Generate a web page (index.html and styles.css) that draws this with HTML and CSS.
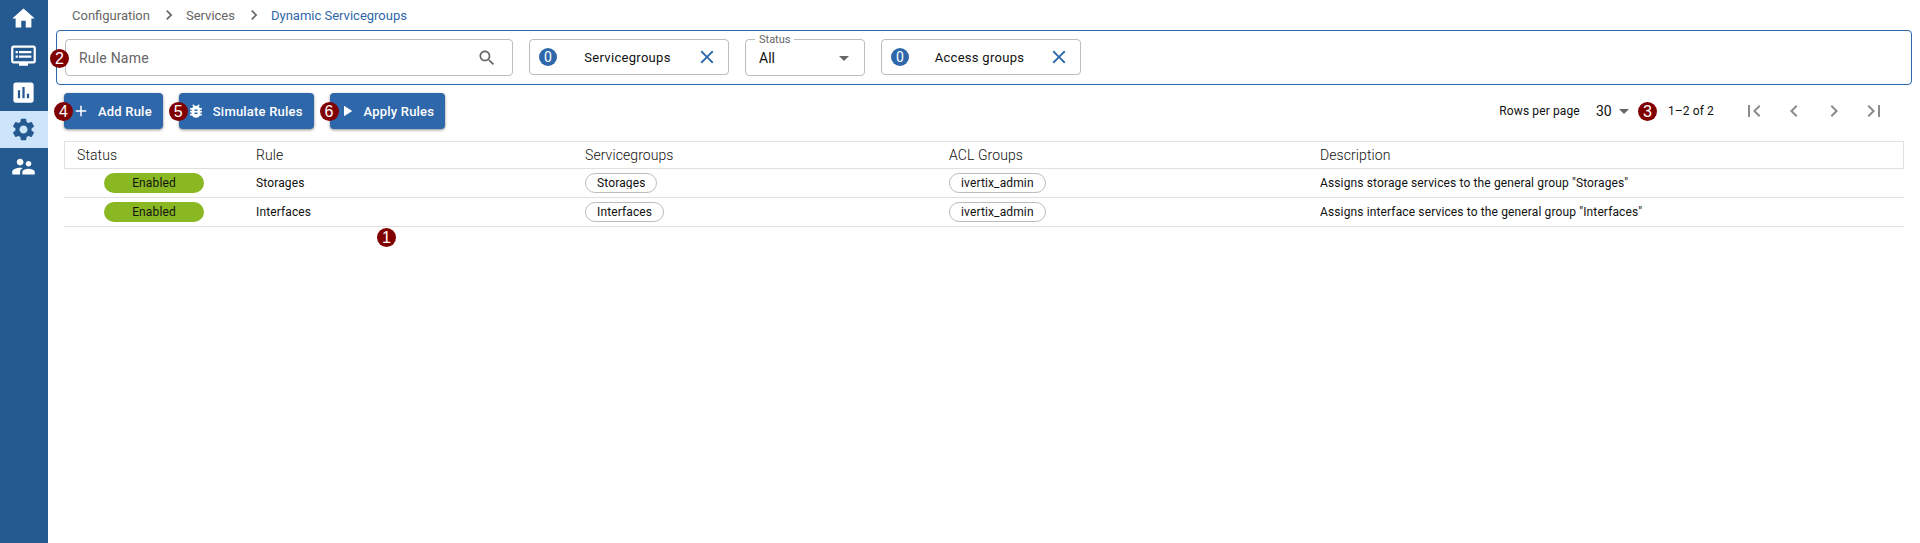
FILE: index.html
```html
<!DOCTYPE html>
<html lang="en">

<head>
    <meta charset="UTF-8">
    <title>Dynamic Servicegroups</title>
    <link rel="stylesheet" href="styles.css">
</head>

<body>
    <div class="app">
        <nav class="side">
            <a class="side-item">
                <svg viewBox="0 0 24 24"><path d="M10 20v-6h4v6h5v-8h3L12 3 2 12h3v8z"/></svg>
            </a>
            <a class="side-item">
                <svg viewBox="0 0 24 24"><path d="M21 3H3c-1.1 0-2 .9-2 2v12c0 1.1.9 2 2 2h5v2h8v-2h5c1.1 0 1.99-.9 1.99-2L23 5c0-1.1-.9-2-2-2zm0 14H3V5h18v12zm-2-9H8v2h11V8zm0 4H8v2h11v-2zM7 8H5v2h2V8zm0 4H5v2h2v-2z"/></svg>
            </a>
            <a class="side-item">
                <svg viewBox="0 0 24 24"><path d="M19 3H5c-1.1 0-2 .9-2 2v14c0 1.1.9 2 2 2h14c1.1 0 2-.9 2-2V5c0-1.1-.9-2-2-2zM9 17H7v-7h2v7zm4 0h-2V7h2v10zm4 0h-2v-4h2v4z"/></svg>
            </a>
            <a class="side-item active">
                <svg viewBox="0 0 24 24"><path d="M19.14 12.94c.04-.3.06-.61.06-.94 0-.32-.02-.64-.07-.94l2.03-1.58c.18-.14.23-.41.12-.61l-1.92-3.32c-.12-.22-.37-.29-.59-.22l-2.39.96c-.5-.38-1.03-.7-1.62-.94l-.36-2.54c-.04-.24-.24-.41-.48-.41h-3.84c-.24 0-.43.17-.47.41l-.36 2.54c-.59.24-1.13.57-1.62.94l-2.39-.96c-.22-.08-.47 0-.59.22L2.74 8.87c-.12.21-.08.47.12.61l2.03 1.58c-.05.3-.09.63-.09.94s.02.64.07.94l-2.03 1.58c-.18.14-.23.41-.12.61l1.92 3.32c.12.22.37.29.59.22l2.39-.96c.5.38 1.03.7 1.62.94l.36 2.54c.05.24.24.41.48.41h3.84c.24 0 .44-.17.47-.41l.36-2.54c.59-.24 1.13-.56 1.62-.94l2.39.96c.22.08.47 0 .59-.22l1.92-3.32c.12-.22.07-.47-.12-.61l-2.01-1.58zM12 15.6c-1.98 0-3.6-1.62-3.6-3.6s1.62-3.6 3.6-3.6 3.6 1.62 3.6 3.6-1.62 3.6-3.6 3.6z"/></svg>
            </a>
            <a class="side-item">
                <svg viewBox="0 0 24 24"><path d="M16.5 12c1.38 0 2.49-1.12 2.49-2.5S17.88 7 16.5 7C15.12 7 14 8.12 14 9.5s1.12 2.5 2.5 2.5zM9 11c1.66 0 2.99-1.34 2.99-3S10.66 5 9 5C7.34 5 6 6.34 6 8s1.34 3 3 3zm7.5 3c-1.83 0-5.5.92-5.5 2.75V19h11v-2.25c0-1.83-3.67-2.75-5.5-2.75zM9 13c-2.33 0-7 1.17-7 3.5V19h7v-2.25c0-.85.33-2.34 2.37-3.47C10.5 13.1 9.66 13 9 13z"/></svg>
            </a>
        </nav>

        <main class="main">
            <div class="crumbs">
                <span>Configuration</span>
                <svg class="crumb-sep" viewBox="0 0 24 24"><path d="M10 6L8.59 7.41 13.17 12l-4.58 4.59L10 18l6-6z"/></svg>
                <span>Services</span>
                <svg class="crumb-sep" viewBox="0 0 24 24"><path d="M10 6L8.59 7.41 13.17 12l-4.58 4.59L10 18l6-6z"/></svg>
                <span class="crumb-current">Dynamic Servicegroups</span>
            </div>

            <div class="filters">
                <span class="note note-filter">2</span>
                <div class="search">
                    <span>Rule Name</span>
                    <svg viewBox="0 0 24 24"><path d="M15.5 14h-.79l-.28-.27C15.41 12.59 16 11.11 16 9.5 16 5.91 13.09 3 9.5 3S3 5.91 3 9.5 5.91 16 9.5 16c1.61 0 3.09-.59 4.23-1.57l.27.28v.79l5 4.99L20.49 19l-4.99-5zm-6 0C7.01 14 5 11.99 5 9.5S7.01 5 9.5 5 14 7.01 14 9.5 11.99 14 9.5 14z"/></svg>
                </div>
                <div class="picker">
                    <span class="count">0</span>
                    <span class="picker-label">Servicegroups</span>
                    <svg viewBox="0 0 24 24"><path d="M19 6.41L17.59 5 12 10.59 6.41 5 5 6.41 10.59 12 5 17.59 6.41 19 12 13.41 17.59 19 19 17.59 13.41 12z"/></svg>
                </div>
                <div class="status-select">
                    <span class="status-legend">Status</span>
                    <span>All</span>
                    <svg viewBox="0 0 24 24"><path d="M7 10l5 5 5-5z"/></svg>
                </div>
                <div class="picker">
                    <span class="count">0</span>
                    <span class="picker-label">Access groups</span>
                    <svg viewBox="0 0 24 24"><path d="M19 6.41L17.59 5 12 10.59 6.41 5 5 6.41 10.59 12 5 17.59 6.41 19 12 13.41 17.59 19 19 17.59 13.41 12z"/></svg>
                </div>
            </div>

            <div class="toolbar">
                <button class="btn">
                    <span class="note note-btn">4</span>
                    <svg viewBox="0 0 24 24"><path d="M19 13h-6v6h-2v-6H5v-2h6V5h2v6h6v2z"/></svg>
                    Add Rule
                </button>
                <button class="btn">
                    <span class="note note-btn">5</span>
                    <svg viewBox="0 0 24 24"><path d="M20 8h-2.81c-.45-.78-1.07-1.45-1.82-1.96L17 4.41 15.59 3l-2.17 2.17C12.96 5.06 12.49 5 12 5c-.49 0-.96.06-1.41.17L8.41 3 7 4.41l1.62 1.63C7.88 6.55 7.26 7.22 6.81 8H4v2h2.09c-.05.33-.09.66-.09 1v1H4v2h2v1c0 .34.04.67.09 1H4v2h2.81c1.04 1.79 2.97 3 5.19 3s4.15-1.21 5.19-3H20v-2h-2.09c.05-.33.09-.66.09-1v-1h2v-2h-2v-1c0-.34-.04-.67-.09-1H20V8zm-6 8h-4v-2h4v2zm0-4h-4v-2h4v2z"/></svg>
                    Simulate Rules
                </button>
                <button class="btn">
                    <span class="note note-btn">6</span>
                    <svg viewBox="0 0 24 24"><path d="M8 5v14l11-7z"/></svg>
                    Apply Rules
                </button>

                <div class="pager">
                    <span>Rows per page</span>
                    <span class="pager-size">30</span>
                    <svg class="pager-caret" viewBox="0 0 24 24"><path d="M7 10l5 5 5-5z"/></svg>
                    <span class="note note-pager">3</span>
                    <span class="pager-range">1–2 of 2</span>
                    <div class="pager-buttons">
                        <svg viewBox="0 0 24 24"><path d="M18.41 16.59L13.82 12l4.59-4.59L17 6l-6 6 6 6zM6 6h2v12H6z"/></svg>
                        <svg viewBox="0 0 24 24"><path d="M15.41 7.41L14 6l-6 6 6 6 1.41-1.41L10.83 12z"/></svg>
                        <svg viewBox="0 0 24 24"><path d="M10 6L8.59 7.41 13.17 12l-4.58 4.59L10 18l6-6z"/></svg>
                        <svg viewBox="0 0 24 24"><path d="M5.59 7.41L10.18 12l-4.59 4.59L7 18l6-6-6-6zM16 6h2v12h-2z"/></svg>
                    </div>
                </div>
            </div>

            <div class="rules">
                <div class="row head">
                    <div>Status</div>
                    <div>Rule</div>
                    <div>Servicegroups</div>
                    <div>ACL Groups</div>
                    <div>Description</div>
                </div>
                <div class="row">
                    <div><span class="enabled">Enabled</span></div>
                    <div>Storages</div>
                    <div><span class="chip"><span class="chip-text">Storages</span></span></div>
                    <div><span class="chip"><span class="chip-text">ivertix_admin</span></span></div>
                    <div>Assigns storage services to the general group "Storages"</div>
                </div>
                <div class="row">
                    <div><span class="enabled">Enabled</span></div>
                    <div>Interfaces</div>
                    <div><span class="chip"><span class="chip-text">Interfaces</span></span></div>
                    <div><span class="chip"><span class="chip-text">ivertix_admin</span></span></div>
                    <div>Assigns interface services to the general group "Interfaces"</div>
                </div>
                <span class="note note-table">1</span>
            </div>
        </main>
    </div>
</body>

</html>
```

FILE: styles.css
```css
body {
    margin: 0;
    font-family: Roboto, "Liberation Sans", sans-serif;
    color: #111;
    background: #fff;
}

svg {
    fill: currentColor;
    flex: none;
}

.app {
    display: flex;
    height: 543px;
    overflow: hidden;
}

/* Left menu */
.side {
    width: 48px;
    flex: none;
    background: #255a90;
    color: #fff;
}

.side-item {
    display: flex;
    align-items: center;
    justify-content: center;
    height: 37px;
}

.side-item svg {
    width: 27px;
    height: 27px;
    margin-right: 2px;
}

.side-item.active {
    background: #cce5fb;
    color: #255a90;
}

.main {
    flex: 1;
    padding: 0 8px;
}

/* Breadcrumb */
.crumbs {
    display: flex;
    align-items: center;
    height: 30px;
    padding-left: 16px;
    font-size: 13px;
    color: #666;
}

.crumb-sep {
    width: 20px;
    height: 20px;
    margin: 0 7px 0 9px;
}

.crumb-current {
    color: #2f67ab;
}

/* Filter box */
.filters {
    position: relative;
    display: flex;
    align-items: flex-start;
    gap: 16px;
    height: 55px;
    padding: 8px;
    border: 1px solid #2f67ab;
    border-radius: 4px;
    box-sizing: border-box;
}

.search {
    display: flex;
    align-items: center;
    justify-content: space-between;
    width: 448px;
    height: 37px;
    padding: 0 15px 0 13px;
    border: 1px solid #bdbdbd;
    border-radius: 4px;
    box-sizing: border-box;
    font-size: 14px;
    letter-spacing: 0.2px;
    color: #666;
}

.search svg {
    width: 20px;
    height: 20px;
}

.picker {
    display: flex;
    align-items: center;
    width: 200px;
    height: 36px;
    padding: 0 10px 0 9px;
    border: 1px solid #bdbdbd;
    border-radius: 4px;
    box-sizing: border-box;
    font-size: 13px;
    letter-spacing: 0.3px;
}

.picker svg {
    width: 22px;
    height: 22px;
    color: #2f67ab;
}

.picker-label {
    flex: 1;
    padding-left: 2px;
    text-align: center;
}

.count {
    width: 18px;
    height: 18px;
    border-radius: 50%;
    background: #2f67ab;
    color: #fff;
    font-size: 14px;
    line-height: 18px;
    text-align: center;
}

.status-select {
    position: relative;
    display: flex;
    align-items: center;
    justify-content: space-between;
    width: 120px;
    height: 37px;
    padding: 0 8px 0 13px;
    border: 1px solid #bdbdbd;
    border-radius: 4px;
    box-sizing: border-box;
    font-size: 14px;
}

.status-select svg {
    width: 24px;
    height: 24px;
    color: #666;
}

.status-legend {
    position: absolute;
    left: 9px;
    top: -7px;
    padding: 0 4px;
    background: #fff;
    font-size: 11px;
    line-height: 13px;
    color: #666;
}

/* Buttons and pagination */
.toolbar {
    display: flex;
    align-items: center;
    gap: 16px;
    height: 36px;
    margin: 8px 8px 12px;
}

.btn {
    position: relative;
    display: flex;
    align-items: center;
    gap: 8px;
    height: 36px;
    padding: 0 11px 0 8px;
    border: 0;
    border-radius: 4px;
    background: #2f67ab;
    box-shadow: 0 1px 3px rgba(0, 0, 0, 0.45);
    color: #fff;
    font-family: inherit;
    font-size: 13px;
    font-weight: 500;
    letter-spacing: 0.2px;
}

.btn svg {
    width: 18px;
    height: 18px;
}

.pager {
    display: flex;
    align-items: center;
    margin-left: auto;
    margin-right: 10px;
    font-size: 12px;
    letter-spacing: 0.13px;
}

.pager-size {
    margin-left: 16px;
    font-size: 14px;
}

.pager-caret {
    width: 24px;
    height: 24px;
    color: #666;
}

.pager-range {
    margin-left: 11px;
}

.pager-buttons {
    display: flex;
    margin-left: 20px;
    color: #8a8a8a;
}

.pager-buttons svg {
    width: 24px;
    height: 24px;
    padding: 0 8px;
}

/* Rules table */
.rules {
    position: relative;
    margin: 0 8px;
}

.row {
    display: grid;
    grid-template-columns: 179px 329px 364px 371px 1fr;
    align-items: center;
    height: 29px;
    border-bottom: 1px solid #e0e0e0;
    box-sizing: border-box;
    font-size: 12px;
    letter-spacing: 0.13px;
}

.row > div {
    padding-left: 13px;
}

.row.head {
    grid-template-columns: 178px 329px 364px 371px 1fr;
    height: 28px;
    border: 1px solid #e0e0e0;
    font-size: 14px;
    font-weight: 300;
    letter-spacing: 0.08px;
}

.row.head > div:first-child {
    padding-left: 12px;
}

.enabled {
    display: block;
    width: 100px;
    height: 20px;
    margin-left: 27px;
    border-radius: 10px;
    background: #8ab822;
    line-height: 21px;
    text-align: center;
}

.chip {
    display: inline-block;
    height: 20px;
    padding: 1px 11px 0;
    border: 1px solid #bdbdbd;
    border-radius: 10px;
    box-sizing: border-box;
    vertical-align: middle;
}

/* the label box is shorter than the text, descenders get cut */
.chip-text {
    display: block;
    height: 14px;
    overflow: hidden;
    line-height: 17px;
}

/* Numbered callouts */
.note {
    width: 19px;
    height: 19px;
    border-radius: 50%;
    background: #800000;
    color: #fff;
    font-family: "Liberation Sans", Arial, sans-serif;
    font-size: 16px;
    font-weight: 400;
    letter-spacing: 0;
    line-height: 19px;
    text-align: center;
}

.note-filter {
    position: absolute;
    left: -7px;
    top: 18px;
}

.note-btn {
    position: absolute;
    left: -10px;
    top: 9px;
}

.note-pager {
    margin-left: 2px;
}

.note-table {
    position: absolute;
    left: 313px;
    top: 87px;
}
```
